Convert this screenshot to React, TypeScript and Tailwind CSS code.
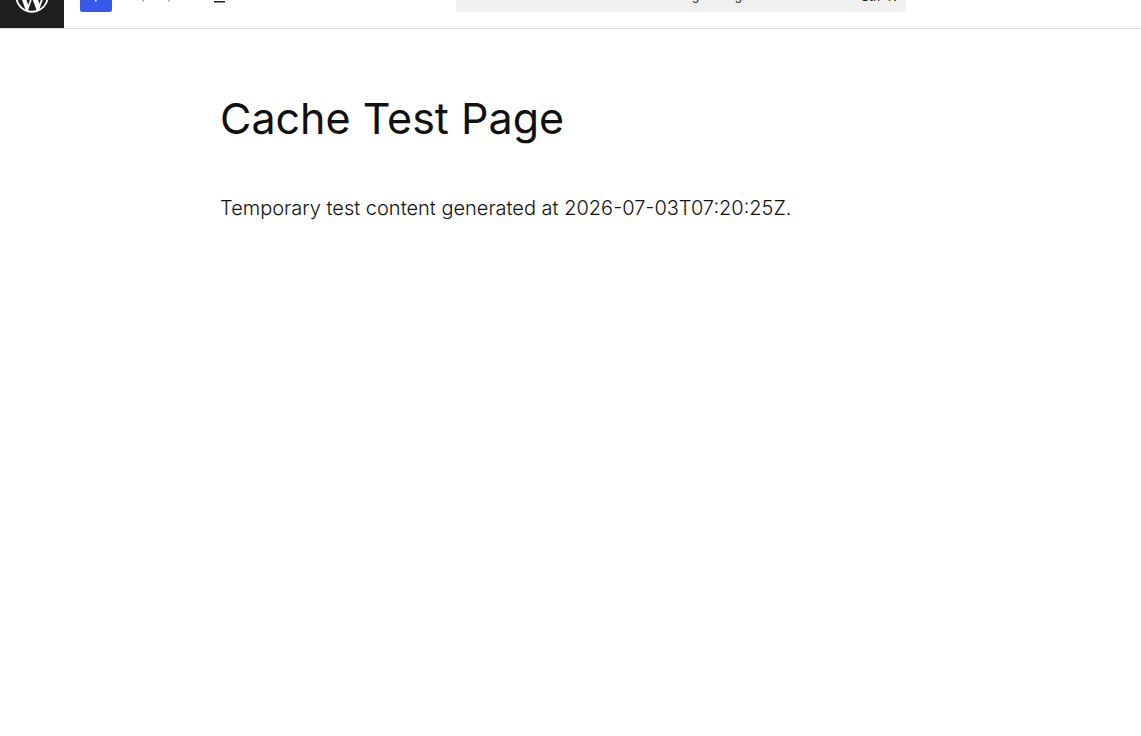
import { useState } from "react";

function WordPressLogo() {
  return (
    <svg viewBox="-2 -2 24 24" className="size-10" fill="currentColor" aria-hidden="true">
      <path d="M20 10c0-5.51-4.49-10-10-10C4.48 0 0 4.49 0 10c0 5.52 4.48 10 10 10 5.51 0 10-4.48 10-10zM7.78 15.37L4.37 6.22c.55-.02 1.17-.08 1.17-.08.5-.06.44-1.13-.06-1.11 0 0-1.45.11-2.37.11-.18 0-.37 0-.58-.01C4.12 2.69 6.87 1.11 10 1.11c2.33 0 4.45.87 6.05 2.34-.68-.11-1.65.39-1.65 1.58 0 .74.45 1.36.9 2.1.35.61.55 1.36.55 2.46 0 1.49-1.4 5-1.4 5l-3.03-8.37c.54-.02.82-.17.82-.17.5-.05.44-1.25-.06-1.22 0 0-1.44.12-2.38.12-.87 0-2.33-.12-2.33-.12-.5-.03-.56 1.2-.06 1.22l.92.08 1.26 3.41zM17.41 10c.24-.64.74-1.87.43-4.25.7 1.29 1.05 2.71 1.05 4.25 0 3.29-1.73 6.24-4.4 7.78.97-2.59 1.94-5.2 2.92-7.78zM6.1 18.09C3.12 16.65 1.11 13.53 1.11 10c0-1.3.23-2.48.72-3.59C3.25 10.3 4.67 14.2 6.1 18.09zm4.03-6.63l2.58 6.98c-.86.29-1.76.45-2.71.45-.79 0-1.57-.11-2.29-.33.81-2.38 1.62-4.74 2.42-7.1z" />
    </svg>
  );
}

function Icon({ path }: { path: string }) {
  return (
    <svg viewBox="0 0 24 24" className="size-6" fill="currentColor" aria-hidden="true">
      <path d={path} />
    </svg>
  );
}

const plus = "M11 12.5V17.5H12.5V12.5H17.5V11H12.5V6H11V11H6V12.5H11Z";
const undo =
  "M18.3 11.7c-.6-.6-1.4-.9-2.3-.9H6.7l2.9-3.3-1.1-1-4.5 5L8.5 16l1-1-2.7-2.7H16c.5 0 .9.2 1.3.5 1 1 1 3.4 1 4.5v.3h1.5v-.2c0-1.5 0-4.3-1.5-5.7z";
const redo =
  "M15.6 6.5l-1.1 1 2.9 3.3H8c-.9 0-1.7.3-2.3.9-1.4 1.5-1.4 4.2-1.4 5.6v.2h1.5v-.3c0-1.1 0-3.5 1-4.5.3-.3.7-.5 1.3-.5h9.2L14.5 15l1.1 1.1 4.6-4.6-4.6-5z";
const listView =
  "M3 6h11v1.5H3V6Zm3.5 5.5h11V13h-11v-1.5ZM21 17H10v1.5h11V17Z";

export default function App() {
  const [inserterOpen, setInserterOpen] = useState(false);

  return (
    <div className="min-h-screen overflow-hidden bg-white font-['Inter',sans-serif] text-[#111111]">
      {/* The header is scrolled partly out of view. */}
      <header className="-mt-9 grid grid-cols-[40%_450px_1fr] items-center border-b border-[#dddddd] font-['Liberation_Sans',sans-serif] text-[13px] text-[#1e1e1e]">
        <div className="flex items-center gap-4">
          <a
            href="#"
            aria-label="View Pages"
            className="flex size-16 items-center justify-center bg-[#1e1e1e] text-white"
          >
            <WordPressLogo />
          </a>
          <div className="flex items-center gap-2">
            <button
              type="button"
              aria-label="Block Inserter"
              aria-pressed={inserterOpen}
              onClick={() => setInserterOpen(!inserterOpen)}
              className="flex size-8 items-center justify-center rounded-[2px] bg-[#3858e9] text-white"
            >
              <Icon path={plus} />
            </button>
            <button
              type="button"
              aria-label="Undo"
              disabled
              className="flex size-8 items-center justify-center text-[#949494]"
            >
              <Icon path={undo} />
            </button>
            <button
              type="button"
              aria-label="Redo"
              disabled
              className="flex size-8 items-center justify-center text-[#949494]"
            >
              <Icon path={redo} />
            </button>
            <button
              type="button"
              aria-label="Document Overview"
              className="flex size-8 items-center justify-center"
            >
              <Icon path={listView} />
            </button>
          </div>
        </div>

        <button
          type="button"
          className="grid h-8 grid-cols-[1fr_auto_1fr] items-center rounded bg-[#f0f0f0] pr-2.5 pl-1"
        >
          <span className="col-start-2 flex gap-1">
            <span>Cache Test Page</span>
            <span>·</span>
            <span>Page</span>
          </span>
          <span className="pt-0.5 text-right">Ctrl+K</span>
        </button>
      </header>

      <main className="px-[220px] pt-[63px]">
        <h1 className="text-[43px] leading-[52px] font-normal">Cache Test Page</h1>
        <p className="mt-12 text-xl leading-8 font-light">
          Temporary test content generated at 2026-07-03T07:20:25Z.
        </p>
      </main>
    </div>
  );
}
